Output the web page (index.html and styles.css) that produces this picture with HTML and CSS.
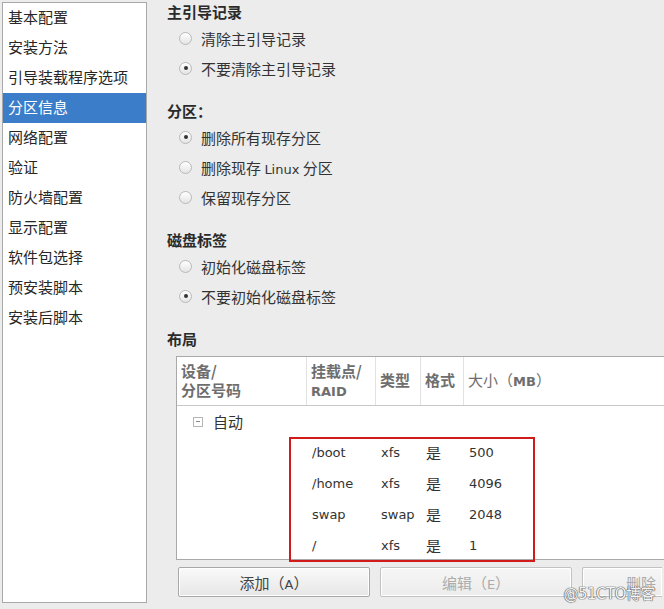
FILE: index.html
```html
<!DOCTYPE html>
<html lang="zh-CN">
<head>
<meta charset="utf-8">
<title>分区信息</title>
<link rel="stylesheet" href="styles.css">
</head>
<body>
<div class="app">
  <nav class="sidebar">
    <div class="nav-item">基本配置</div>
    <div class="nav-item">安装方法</div>
    <div class="nav-item">引导装载程序选项</div>
    <div class="nav-item active">分区信息</div>
    <div class="nav-item">网络配置</div>
    <div class="nav-item">验证</div>
    <div class="nav-item">防火墙配置</div>
    <div class="nav-item">显示配置</div>
    <div class="nav-item">软件包选择</div>
    <div class="nav-item">预安装脚本</div>
    <div class="nav-item">安装后脚本</div>
  </nav>
  <main class="main">
    <section class="group">
      <h2 class="group-title">主引导记录</h2>
      <label class="radio-row"><span class="radio"></span><span>清除主引导记录</span></label>
      <label class="radio-row"><span class="radio checked"></span><span>不要清除主引导记录</span></label>
    </section>
    <section class="group">
      <h2 class="group-title">分区：</h2>
      <label class="radio-row"><span class="radio checked"></span><span>删除所有现存分区</span></label>
      <label class="radio-row"><span class="radio"></span><span>删除现存 <span class="lat">Linux</span> 分区</span></label>
      <label class="radio-row"><span class="radio"></span><span>保留现存分区</span></label>
    </section>
    <section class="group">
      <h2 class="group-title">磁盘标签</h2>
      <label class="radio-row"><span class="radio"></span><span>初始化磁盘标签</span></label>
      <label class="radio-row"><span class="radio checked"></span><span>不要初始化磁盘标签</span></label>
    </section>
    <section class="layout">
      <h2 class="group-title">布局</h2>
      <div class="table">
        <div class="thead">
          <div class="th c1">设备/<br>分区号码</div>
          <div class="th c2">挂载点/<br><span class="lat">RAID</span></div>
          <div class="th c3">类型</div>
          <div class="th c4">格式</div>
          <div class="th c5">大小（<span class="lat">MB</span>）</div>
        </div>
        <div class="tbody">
          <div class="tree-row"><span class="expander"></span><span>自动</span></div>
          <div class="row"><div class="td c1"></div><div class="td c2">/boot</div><div class="td c3">xfs</div><div class="td c4">是</div><div class="td c5">500</div></div>
          <div class="row"><div class="td c1"></div><div class="td c2">/home</div><div class="td c3">xfs</div><div class="td c4">是</div><div class="td c5">4096</div></div>
          <div class="row"><div class="td c1"></div><div class="td c2">swap</div><div class="td c3">swap</div><div class="td c4">是</div><div class="td c5">2048</div></div>
          <div class="row"><div class="td c1"></div><div class="td c2">/</div><div class="td c3">xfs</div><div class="td c4">是</div><div class="td c5">1</div></div>
          <div class="highlight"></div>
        </div>
      </div>
      <div class="buttons">
        <button class="btn">添加（<span class="lat">A</span>）</button>
        <button class="btn disabled">编辑（<span class="lat">E</span>）</button>
        <button class="btn disabled short">删除</button>
      </div>
    </section>
  </main>
</div>
<div class="watermark">@51CTO博客</div>
</body>
</html>
```
FILE: styles.css
```css
html, body {
  margin: 0;
  padding: 0;
}
body {
  width: 664px;
  height: 609px;
  overflow: hidden;
  background: #ececec;
  font-family: "Noto Sans CJK SC", "DejaVu Sans", sans-serif;
  font-size: 15px;
  color: #2e2e2e;
  position: relative;
}
.lat {
  font-family: "DejaVu Sans", sans-serif;
  font-size: 13px;
}
.app {
  display: flex;
  align-items: flex-start;
  height: 609px;
}
.sidebar {
  margin: 2px 0 0 2px;
  width: 143px;
  height: 599px;
  background: #fff;
  border: 1px solid #a9a9a9;
  flex: none;
}
.nav-item {
  height: 28px;
  line-height: 28px;
  padding: 0 0 2px 5px;
  white-space: nowrap;
  color: #262626;
}
.nav-item.active {
  background: #3b7dc9;
  color: #fff;
}
.main {
  flex: 1;
  padding: 2px 0 0 20px;
  min-width: 0;
}
.group {
  margin-bottom: 18px;
}
.group-title {
  margin: 0 0 1px 0;
  font-size: 15px;
  font-weight: bold;
  line-height: 20px;
  height: 20px;
  color: #2a2a2a;
}
.radio-row {
  display: flex;
  align-items: center;
  height: 30px;
  padding-left: 12px;
  gap: 9px;
  color: #333;
}
.radio {
  width: 11px;
  height: 11px;
  border-radius: 50%;
  border: 1px solid #b9b9b9;
  background: linear-gradient(#ffffff, #e4e4e4);
  position: relative;
  flex: none;
}
.radio.checked::after {
  content: "";
  position: absolute;
  left: 3.5px;
  top: 3.5px;
  width: 4px;
  height: 4px;
  border-radius: 50%;
  background: #333;
}
.layout .group-title {
  margin-bottom: 7px;
}
.table {
  margin-left: 9px;
  width: 520px;
  height: 202px;
  background: #fff;
  border: 1px solid #a9a9a9;
  display: flex;
  flex-direction: column;
}
.thead {
  display: flex;
  height: 48px;
  border-bottom: 1px solid #c8c8c8;
  flex: none;
}
.th {
  box-sizing: border-box;
  padding: 4px 0 0 4px;
  line-height: 19px;
  color: #6e6e6e;
  font-weight: bold;
  border-right: 1px solid #e2e2e2;
}
.th .lat {
  font-weight: bold;
}
.th.c3, .th.c4, .th.c5 {
  padding-top: 13px;
}
.th.c5 {
  border-right: none;
  font-weight: normal;
  flex: 1;
}
.c1 { width: 130px; }
.c2 { width: 69px; }
.c3 { width: 45px; }
.c4 { width: 43px; }
.c5 { width: 80px; }
.tbody {
  position: relative;
  flex: 1;
}
.tree-row {
  display: flex;
  align-items: center;
  height: 31px;
  padding-left: 16px;
  gap: 10px;
  color: #333;
}
.expander {
  width: 8px;
  height: 8px;
  border: 1px solid #b5b5b5;
  position: relative;
  flex: none;
}
.expander::after {
  content: "";
  position: absolute;
  left: 2px;
  top: 3.5px;
  width: 4px;
  height: 1px;
  background: #888;
}
.row {
  display: flex;
  height: 31px;
  line-height: 31px;
  font-family: "DejaVu Sans", "Noto Sans CJK SC", sans-serif;
  font-size: 13px;
  color: #333;
}
.td {
  box-sizing: border-box;
  padding-left: 5px;
}
.td.c4 {
  font-family: "Noto Sans CJK SC", sans-serif;
  font-size: 15px;
}
.highlight {
  position: absolute;
  left: 112px;
  top: 31px;
  width: 242px;
  height: 121px;
  border: 2px solid #d11a1a;
}
.buttons {
  display: flex;
  gap: 10px;
  margin: 7px 0 0 11px;
}
.btn {
  flex: none;
  width: 192px;
  height: 30px;
  border: 1px solid #a8a8a8;
  border-radius: 2px;
  background: linear-gradient(#fafafa, #e6e6e6);
  font-family: "Noto Sans CJK SC", sans-serif;
  font-size: 15px;
  color: #444;
  padding: 0;
  box-shadow: inset 0 0 0 1px #fff;
}
.btn.disabled {
  color: #ababab;
  background: linear-gradient(#f6f6f6, #ececec);
  border-color: #c2c2c2;
}
.btn.short {
  width: 80px;
  text-align: right;
  padding-right: 6px;
  border-right: none;
  border-radius: 2px 0 0 2px;
}
.watermark {
  position: absolute;
  right: 9px;
  bottom: 6px;
  font-family: "DejaVu Sans", "Noto Sans CJK SC", sans-serif;
  font-size: 15px;
  color: #f4f4f4;
  text-shadow: 0 0 1px #555, 0 0 1px #555, 0 0 1px #555;
  letter-spacing: -0.5px;
}
```
